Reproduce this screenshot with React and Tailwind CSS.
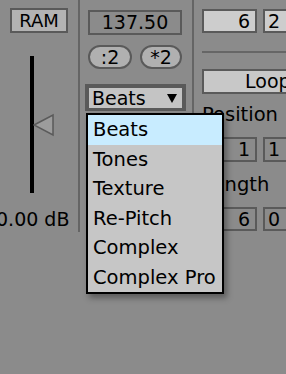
export default function App() {
  const font = { fontFamily: '"DejaVu Sans", sans-serif' };
  const items = ["Beats", "Tones", "Texture", "Re-Pitch", "Complex", "Complex Pro"];
  return (
    <div className="relative w-[286px] h-[374px] overflow-hidden bg-[#8b8b8b] text-black flex" style={font}>
      {/* Column 1 */}
      <div className="w-[78px] shrink-0 flex flex-col">
        <div className="ml-[10px] mt-[8px] w-[58px] h-[25px] border-2 border-[#5a5a5a] bg-[#b3b3b3] flex items-center justify-center text-[18px] leading-none">
          RAM
        </div>
        <div className="mt-[23px] ml-[30px] flex items-center">
          <div className="w-[4px] h-[137px] bg-black shrink-0" />
          <svg width="22" height="24" viewBox="0 0 22 24" className="-ml-[1px] shrink-0">
            <polygon points="1,12 20,2 20,22" fill="#9c9c9c" stroke="#5a5a5a" strokeWidth="1.5" />
          </svg>
        </div>
        <div className="mt-[17px] -ml-[4px] text-[19px] leading-none whitespace-nowrap">0.00 dB</div>
      </div>
      <div className="w-[2px] shrink-0 h-[232px] bg-[#656565]" />
      {/* Column 2 */}
      <div className="w-[112px] shrink-0 flex flex-col">
        <div className="-mt-[21px] ml-[9px] h-[20px] text-[19px] leading-[20px] whitespace-nowrap">Seg. BPM</div>
        <div className="ml-[8px] mt-[11px] w-[94px] h-[25px] border-2 border-[#5a5a5a] flex items-center justify-center text-[19px] leading-none">
          137.50
        </div>
        <div className="ml-[8px] mt-[10px] flex gap-[8px]">
          <div className="w-[44px] h-[24px] rounded-full border-2 border-[#5a5a5a] bg-[#b0b0b0] flex items-center justify-center text-[19px] leading-none">:2</div>
          <div className="w-[42px] h-[24px] rounded-full border-2 border-[#5a5a5a] bg-[#b0b0b0] flex items-center justify-center text-[19px] leading-none">*2</div>
        </div>
        <div className="ml-[5px] mt-[15px] w-[101px] h-[27px] bg-[#5a5a5a] p-[4px] pb-[3px]">
          <div className="w-full h-full bg-[#c4c4c4] flex items-center justify-between pl-[3px] pr-[5px] text-[19px] leading-none">
            <span>Beats</span>
            <svg width="10" height="9" viewBox="0 0 10 9"><polygon points="0,0 10,0 5,9" fill="black" /></svg>
          </div>
        </div>
      </div>
      <div className="w-[2px] shrink-0 h-[232px] bg-[#656565]" />
      {/* Column 3 */}
      <div className="flex-1 min-w-0 flex flex-col pl-[8px]">
        <div className="mt-[9px] flex gap-[6px]">
          <div className="w-[55px] h-[24px] shrink-0 border-2 border-[#5a5a5a] bg-[#cdcdcd] flex items-center justify-end pr-[5px] text-[19px] leading-none">6</div>
          <div className="w-[55px] h-[24px] shrink-0 border-2 border-[#5a5a5a] bg-[#cdcdcd] flex items-center justify-start pl-[3px] text-[19px] leading-none">2</div>
        </div>
        <div className="mt-[18px] h-[2px] w-[120px] shrink-0 bg-[#666666]" />
        <div className="mt-[16px] w-[120px] h-[25px] shrink-0 border-2 border-[#5a5a5a] bg-[#c8c8c8] flex items-center pl-[41px] text-[19px] leading-none">Loop</div>
        <div className="mt-[9px] h-[24px] text-[19.5px] leading-[24px] whitespace-nowrap">Position</div>
        <div className="mt-[10px] flex gap-[6px]">
          <div className="w-[55px] h-[25px] shrink-0 border-2 border-[#5a5a5a] flex items-center justify-end pr-[5px] text-[19px] leading-none">1</div>
          <div className="w-[55px] h-[25px] shrink-0 border-2 border-[#5a5a5a] flex items-center justify-start pl-[3px] text-[19px] leading-none">1</div>
        </div>
        <div className="mt-[11px] h-[24px] text-[19.5px] leading-[24px] whitespace-nowrap">Length</div>
        <div className="mt-[10px] flex gap-[6px]">
          <div className="w-[55px] h-[24px] shrink-0 border-2 border-[#5a5a5a] flex items-center justify-end pr-[5px] text-[19px] leading-none">6</div>
          <div className="w-[55px] h-[24px] shrink-0 border-2 border-[#5a5a5a] flex items-center justify-start pl-[3px] text-[19px] leading-none">0</div>
        </div>
      </div>
      {/* Dropdown menu overlay */}
      <div className="absolute left-[86px] top-[113px] w-[138px] h-[181px] border-2 border-black bg-[#c6c6c6] shadow-[3px_4px_6px_rgba(0,0,0,0.35)] flex flex-col">
        {items.map((it, i) => (
          <div
            key={it}
            className={
              i === 0
                ? "h-[29.5px] flex items-center pl-[5px] bg-[#c8ecff] text-[19.5px] leading-none whitespace-nowrap"
                : "h-[29.5px] flex items-center pl-[5px] text-[19.5px] leading-none whitespace-nowrap"
            }
          >
            {it}
          </div>
        ))}
      </div>
    </div>
  );
}
